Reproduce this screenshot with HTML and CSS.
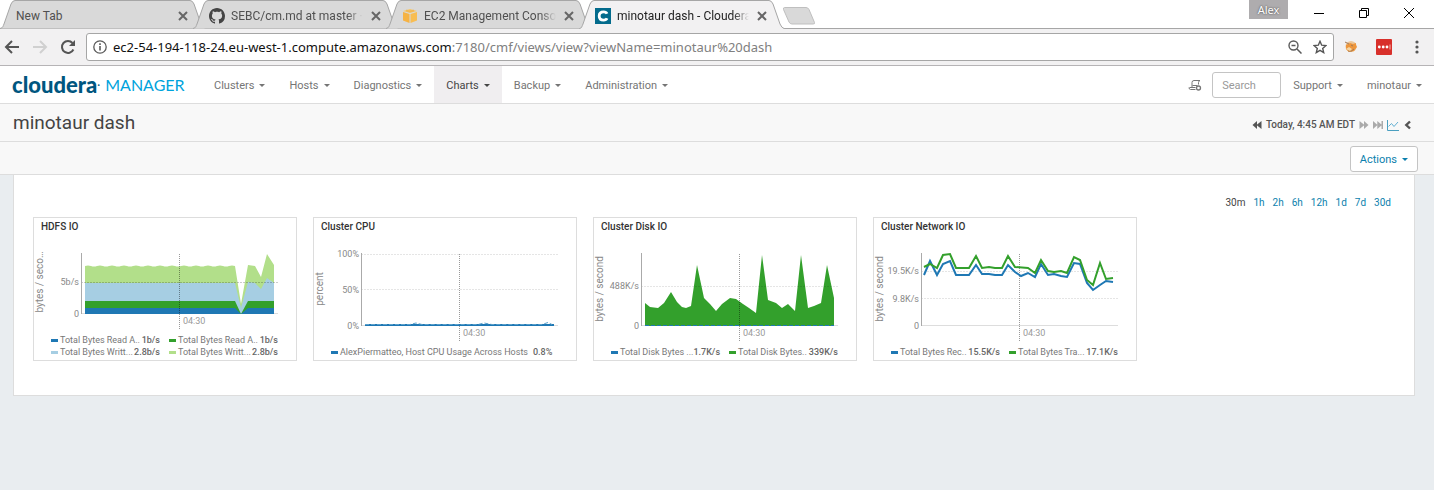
FILE: index.html
```html
<!DOCTYPE html>
<html lang="en">
<head>
<meta charset="utf-8">
<title>minotaur dash - Cloudera Manager</title>
<link rel="stylesheet" href="styles.css">
</head>
<body>
<header class="browser">
  <div class="tabstrip">
    <div class="tab">
      <svg class="tab-shape" viewBox="0 0 206 29" preserveAspectRatio="none"><path d="M0 28.5C3 28 3 26 4 24L11 4Q12.500 .5 15 .5H190Q192.500 .5 194 4L201 24Q202.500 28 206 28.500"/></svg>
      <button class="tab-title">New Tab</button>
      <button class="tab-close" aria-label="Close tab"><svg width="10" height="10" viewBox="0 0 10 10"><path d="M1 1l8 8M9 1l-8 8"/></svg></button>
    </div>
    <div class="tab">
      <svg class="tab-shape" viewBox="0 0 206 29" preserveAspectRatio="none"><path d="M0 28.5C3 28 3 26 4 24L11 4Q12.500 .5 15 .5H190Q192.500 .5 194 4L201 24Q202.500 28 206 28.500"/></svg>
      <svg class="favicon" viewBox="0 0 16 16"><path fill="#444" d="M8 0C3.580 0 0 3.580 0 8c0 3.540 2.290 6.530 5.470 7.590.4.070.55-.17.55-.38 0-.19-.01-.82-.01-1.490-2.010.37-2.530-.49-2.690-.94-.09-.23-.48-.94-.82-1.130-.28-.15-.68-.52-.01-.53.63-.01 1.080.58 1.230.82.72 1.210 1.870.87 2.330.66.070-.52.28-.87.51-1.070-1.780-.2-3.640-.89-3.640-3.950 0-.87.31-1.590.82-2.150-.08-.2-.36-1.020.08-2.120 0 0 .67-.21 2.200.82.640-.18 1.320-.27 2-.27s1.360.09 2 .27c1.530-1.040 2.200-.82 2.200-.82.440 1.100.16 1.920.08 2.120.51.56.82 1.270.82 2.150 0 3.070-1.870 3.750-3.650 3.950.29.25.54.73.54 1.480 0 1.070-.01 1.930-.01 2.200 0 .21.15.46.55.38A8.010 8.010 0 0 0 16 8c0-4.420-3.580-8-8-8z"/></svg>
      <button class="tab-title fade">SEBC/cm.md at master · A</button>
      <button class="tab-close" aria-label="Close tab"><svg width="10" height="10" viewBox="0 0 10 10"><path d="M1 1l8 8M9 1l-8 8"/></svg></button>
    </div>
    <div class="tab">
      <svg class="tab-shape" viewBox="0 0 206 29" preserveAspectRatio="none"><path d="M0 28.5C3 28 3 26 4 24L11 4Q12.500 .5 15 .5H190Q192.500 .5 194 4L201 24Q202.500 28 206 28.500"/></svg>
      <svg class="favicon" viewBox="0 0 16 16"><path fill="#f9c766" d="M1 3l7-2 7 2-7 2z"/><path fill="#f6b344" d="M1 4l6.500 2v9L1 12.500z"/><path fill="#f8bd52" d="M8.500 6L15 4v8.500L8.500 15z"/><path fill="#e8a33c" d="M4 1.500l4 1 4-1v2l-4 1-4-1z" opacity=".4"/></svg>
      <button class="tab-title fade">EC2 Management Consol</button>
      <button class="tab-close" aria-label="Close tab"><svg width="10" height="10" viewBox="0 0 10 10"><path d="M1 1l8 8M9 1l-8 8"/></svg></button>
    </div>
    <div class="tab active">
      <svg class="tab-shape" viewBox="0 0 206 29" preserveAspectRatio="none"><path d="M0 29C3 28 3 26 4 24L11 4Q12.500 .5 15 .5H190Q192.500 .5 194 4L201 24Q202.500 28 206 29"/></svg>
      <svg class="favicon" viewBox="0 0 16 16"><path fill="#036b8c" d="M0 0h16v16H0z"/><path fill="none" stroke="#fff" stroke-width="2.800" d="M12 10.300Q11.200 12.100 8.600 12.100C5.500 12.100 4.200 10.500 4.200 8s1.300-4.100 4.400-4.100q2.600 0 3.400 1.800"/></svg>
      <button class="tab-title fade">minotaur dash - Cloudera</button>
      <button class="tab-close" aria-label="Close tab"><svg width="10" height="10" viewBox="0 0 10 10"><path d="M1 1l8 8M9 1l-8 8"/></svg></button>
    </div>
    <button class="new-tab" aria-label="New tab"><svg width="36" height="20" viewBox="0 0 36 20"><path d="M3.500 1.500H25Q27 1.500 28 3.500l5.500 13q.7 1.500-1.500 1.500H11Q9 18 8 16L2.500 3.500Q2 1.500 3.500 1.500z" fill="#d9d9d9" stroke="#bfbfbf"/></svg></button>
    <div class="window-controls">
      <button class="profile">Alex</button>
      <button class="win" aria-label="Minimize"><svg width="12" height="12" viewBox="0 0 12 12"><path d="M1 6.500h10"/></svg></button>
      <button class="win" aria-label="Restore"><svg width="12" height="12" viewBox="0 0 12 12"><path d="M1.500 3.500h7v7h-7zM3.500 3.500v-2h7v7h-2"/></svg></button>
      <button class="win" aria-label="Close"><svg width="12" height="12" viewBox="0 0 12 12"><path d="M1 1l10 10M11 1L1 11"/></svg></button>
    </div>
  </div>
  <div class="toolbar">
    <button class="tool" aria-label="Back"><svg width="16" height="16" viewBox="0 0 16 16"><path d="M15 8H2M8 2L2 8l6 6" stroke="#555"/></svg></button>
    <button class="tool" aria-label="Forward"><svg width="16" height="16" viewBox="0 0 16 16"><path d="M1 8h13M8 2l6 6-6 6" stroke="#d0d0d0"/></svg></button>
    <button class="tool" aria-label="Reload"><svg width="16" height="16" viewBox="0 0 16 16"><path d="M13.400 10.500A6 6 0 1 1 12.500 4" stroke="#555"/><path class="head" d="M15 1v6H9z"/></svg></button>
    <div class="address">
      <svg width="14" height="14" viewBox="0 0 14 14"><circle cx="7" cy="7" r="6.200" fill="none" stroke="#5a5a5a" stroke-width="1.300"/><path d="M6.200 6h1.600v4.500H6.200zM6.200 3.300h1.600v1.600H6.200z" fill="#5a5a5a"/></svg>
      <a class="url" href="#">ec2-54-194-118-24.eu-west-1.compute.amazonaws.com<span>:7180/cmf/views/view?viewName=minotaur%20dash</span></a>
      <button class="plain" aria-label="Zoom out"><svg width="14" height="14" viewBox="0 0 14 14"><circle cx="5.500" cy="5.500" r="4.500" fill="none" stroke="#5a5a5a" stroke-width="1.400"/><path d="M3.500 5.500h4M9 9l4.500 4.500" stroke="#5a5a5a" stroke-width="1.500"/></svg></button>
      <button class="plain" aria-label="Bookmark"><svg width="14" height="14" viewBox="0 0 14 14"><path d="M7 1.300l1.700 3.900 4.200.4-3.200 2.800 1 4.200L7 10.400l-3.700 2.200 1-4.200L1.100 5.600l4.200-.4z" fill="none" stroke="#555" stroke-width="1.400"/></svg></button>
    </div>
    <button class="plain ext" aria-label="Extension"><svg width="14" height="14" viewBox="0 0 14 14"><circle cx="7" cy="6.500" r="5.500" fill="#ecc79a"/><path d="M2 5l4-2 3 1 3-1v2l1 2-3 4-5 1-3-3z" fill="#ed963c"/><path d="M1 2l4 2M4 11q4 1 6-2M7 5l2 1" stroke="#a0795a" fill="none"/><path d="M2 9l3-2 3 2-2 2z" fill="#f6d6a3"/></svg></button>
    <button class="plain ext" aria-label="Password manager"><svg width="16" height="16" viewBox="0 0 16 16"><rect width="16" height="16" rx="1" fill="#d8302b"/><path d="M14 5.500v5" stroke="#f3b5b2"/><circle cx="3.300" cy="8" r="1.400" fill="#fff"/><circle cx="7.200" cy="8" r="1.400" fill="#fff"/><circle cx="11" cy="8" r="1.400" fill="#fff"/></svg></button>
    <button class="plain ext" aria-label="Browser menu"><svg width="14" height="14" viewBox="0 0 14 14"><circle cx="7" cy="2" r="1.600" fill="#555"/><circle cx="7" cy="7" r="1.600" fill="#555"/><circle cx="7" cy="12" r="1.600" fill="#555"/></svg></button>
  </div>
</header>

<nav class="nav">
  <a class="brand" href="#"><b>cloudera</b><sup>·</sup><span>MANAGER</span></a>
  <button class="menu">Clusters</button>
  <button class="menu">Hosts</button>
  <button class="menu">Diagnostics</button>
  <button class="menu current">Charts</button>
  <button class="menu">Backup</button>
  <button class="menu">Administration</button>
  <div class="nav-right">
    <button class="plain" aria-label="Recent commands"><svg width="14" height="14" viewBox="0 0 14 14"><path d="M4 9V4.500Q4 2.500 6 2.500h6q-1.500.5-1.500 2v2M1 9.500q0 2 1.500 2H7.500M1.500 9.500h6M4.500 7.500h5" fill="none" stroke="#777"/><circle cx="10.500" cy="10" r="2" fill="none" stroke="#777" stroke-width="1.300"/></svg></button>
    <input class="search" type="text" placeholder="Search" aria-label="Search">
    <button class="menu">Support</button>
    <button class="menu">minotaur</button>
  </div>
</nav>

<section class="titlebar">
  <h1>minotaur dash</h1>
  <div class="timebar">
    <button class="plain" aria-label="Step back"><svg width="10" height="10" viewBox="0 0 10 10"><path d="M5 1v8L.5 5zM9.500 1v8L4.500 5z" fill="#555"/></svg></button>
    <time>Today, 4:45 AM EDT</time>
    <button class="plain" aria-label="Step forward"><svg width="10" height="10" viewBox="0 0 10 10"><path d="M.5 1l5 4-5 4zM5 1l4.500 4L5 9z" fill="#aaa"/></svg></button>
    <button class="plain" aria-label="Jump to now"><svg width="10" height="10" viewBox="0 0 10 10"><path d="M0 1l4.500 4L0 9zM4.300 1L9 5 4.300 9zM8.500 1H10v8H8.500z" fill="#aaa"/></svg></button>
    <button class="plain" aria-label="Show timeline"><svg width="12" height="12" viewBox="0 0 12 12"><path d="M.5 1v10.500H12" fill="none" stroke="#4b9fc0"/><path d="M1.500 7.500l3-3 2.500 3 4-4.500" fill="none" stroke="#62b0d2"/></svg></button>
    <button class="plain" aria-label="Collapse"><svg width="10" height="10" viewBox="0 0 10 10"><path d="M7 1.500L3.300 5 7 8.500" fill="none" stroke="#555" stroke-width="2.400"/></svg></button>
  </div>
</section>
<section class="actionbar"><button class="actions menu">Actions</button></section>

<main class="panel">
  <div class="ranges">
    <b>30m</b><a href="#">1h</a><a href="#">2h</a><a href="#">6h</a><a href="#">12h</a><a href="#">1d</a><a href="#">7d</a><a href="#">30d</a>
  </div>
  <div class="cards">
    <article class="card">
      <h2>HDFS IO</h2>
      <svg class="plot" viewBox="1 1 262 125">
        <path fill="#b2df8a" d="M52 33q3-1 6 0t6 0 6 0 6 0 6 0 6 0 6 0 6 0 6 0 6 0 6 0 6 0 6 0 6 0 6 0 6 0 6 0 6 0 6 0 6 0 6 0 6 0 6 0 6 0 6 0L202 33 208 71 215 32 222 33 228 44 234 21 241 32V81H52z"/>
        <path fill="#a6cee3" d="M52 50H202L208 75 215 49 222 50 228 56 234 45 241 50V81H52z"/>
        <path fill="#33a02c" d="M52 68H202L208 81 215 68H241V81H52z"/>
        <path fill="#1f78b4" d="M52 75H202L208 81 215 75H241V81H52z"/>
        <path class="mark" stroke="#33a02c" d="M52 74.500H202M215 74.500H241"/>
        <path class="grid over" d="M48 49.500H245"/><path class="base" d="M48 80.500H52M241 80.500H245"/><path class="axis" d="M48.500 20V81"/><path class="now" d="M146.500 21V97"/>
        <g class="ylabels"><text x="46" y="52">5b/s</text><text x="46" y="84">0</text></g>
        <text class="xlabel" x="150" y="91">04:30</text>
        <text class="unit" transform="translate(10 49) rotate(-90)">bytes / seco…</text>
      </svg>
      <ul class="legend">
        <li><i class="blue"></i><span>Total Bytes Read A..</span><b>1b/s</b></li>
        <li><i class="green"></i><span>Total Bytes Read A..</span><b>1b/s</b></li>
        <li><i class="sky"></i><span>Total Bytes Writt...</span><b>2.8b/s</b></li>
        <li><i class="lime"></i><span>Total Bytes Writt...</span><b>2.8b/s</b></li>
      </ul>
    </article>
    <article class="card">
      <h2>Cluster CPU</h2>
      <svg class="plot" viewBox="1 1 262 125">
        <path class="grid" d="M48 21.500H245M48 56.500H245"/><path class="base" d="M48 92.500H245"/><path class="axis" d="M48.500 20V93"/><path class="now" d="M146.500 21V109"/>
        <path fill="none" stroke="#1f78b4" stroke-width="2" d="M52 92H241"/>
        <path class="mark" stroke="#5a9fca" d="M52 91.500H97L103 90 109 91.500H165L171 90 179 91.500H229L235 89.500 239 91.500"/>
        <g class="ylabels"><text x="46" y="24">100%</text><text x="46" y="60">50%</text><text x="46" y="96">0%</text></g>
        <text class="xlabel" x="150" y="103">04:30</text>
        <text class="unit" transform="translate(10 56) rotate(-90)">percent</text>
      </svg>
      <ul class="legend single">
        <li><i class="blue"></i><span>AlexPiermatteo, Host CPU Usage Across Hosts</span><b>0.8%</b></li>
      </ul>
    </article>
    <article class="card">
      <h2>Cluster Disk IO</h2>
      <svg class="plot" viewBox="1 1 262 125">
        <path fill="#33a02c" d="M52 70L57 74 65 75 71 70 78 59 84 69 89 74 93 75 98 73 104 32 111 65 117 71 123 78 129 71 137 65 143 66 150 71 156 75 163 80 169 22 175 67 183 70 189 75 195 71 202 78 208 22 215 75 221 73 228 70 234 32 241 65V93H52z"/>
        <path class="mark" stroke="#1f78b4" d="M52 92.500H241"/>
        <path class="grid" d="M48 53.500H245"/><path class="base" d="M241 92.500H245M48 92.500H52"/><path class="axis" d="M48.500 20V93"/><path class="now" d="M146.500 21V109"/>
        <g class="ylabels"><text x="46" y="56">488K/s</text><text x="46" y="96">0</text></g>
        <text class="xlabel" x="150" y="103">04:30</text>
        <text class="unit" transform="translate(10 56) rotate(-90)">bytes / second</text>
      </svg>
      <ul class="legend">
        <li><i class="blue"></i><span>Total Disk Bytes ...</span><b>1.7K/s</b></li>
        <li><i class="green"></i><span>Total Disk Bytes..</span><b>339K/s</b></li>
      </ul>
    </article>
    <article class="card">
      <h2>Cluster Network IO</h2>
      <svg class="plot" viewBox="1 1 262 125">
        <path class="grid" d="M48 38.500H245M48 65.500H245"/><path class="base" d="M48 92.500H245"/><path class="axis" d="M48.500 20V93"/><path class="now" d="M146.500 21V109"/>
        <path class="line" stroke="#1f78b4" d="M51 42L57 28 64 42 70 31 77 28 83 42H96L103 32 109 41H116L122 42 129 42 135 32 142 39 148 43 155 40 162 44 168 31 175 42 181 41 188 43 194 44 201 30 207 31 214 50 220 57 227 52 233 48 240 49"/>
        <path class="line" stroke="#33a02c" d="M51 34L57 31 64 35 70 22 77 21 83 35H96L103 23 109 35 116 34 122 35 129 35 135 23 142 34 155 35 162 40 168 27 175 38 181 39 188 38 194 40 201 24 207 27 214 47 220 52 227 30 233 46 240 45"/>
        <g class="ylabels"><text x="46" y="41">19.5K/s</text><text x="46" y="69">9.8K/s</text><text x="46" y="96">0</text></g>
        <text class="xlabel" x="150" y="103">04:30</text>
        <text class="unit" transform="translate(10 56) rotate(-90)">bytes / second</text>
      </svg>
      <ul class="legend">
        <li><i class="blue"></i><span>Total Bytes Rec..</span><b>15.5K/s</b></li>
        <li><i class="green"></i><span>Total Bytes Tra...</span><b>17.1K/s</b></li>
      </ul>
    </article>
  </div>
</main>
</body>
</html>
```

FILE: styles.css
```css
* { box-sizing: border-box; }
body { margin: 0; background: #e9edf0; color: #444; font: 11px/16px Roboto, "Liberation Sans", sans-serif; }
button { margin: 0; padding: 0; border: 0; background: none; color: inherit; font: inherit; white-space: nowrap; }
a { color: #0b7fad; text-decoration: none; }
svg { display: block; flex: none; }
h1, h2, ul { margin: 0; padding: 0; }
.plain { flex: none; }

.browser { background: #fff; }
.tabstrip { display: flex; height: 29px; border-bottom: 1px solid #a6a6a6; }
.tab { position: relative; display: flex; align-items: center; width: 206px; height: 29px; margin-right: -13px; padding: 2px 18px 0 16px; color: #505050; }
.tab-shape { position: absolute; inset: 0; width: 100%; height: 29px; }
.tab-shape path { fill: #d9d9d9; stroke: #a6a6a6; }
.tab.active { z-index: 1; color: #222; }
.tab.active .tab-shape path { fill: #f2f1f2; }
.favicon { position: relative; width: 16px; height: 16px; margin-right: 6px; }
.tab-title { position: relative; flex: 1; min-width: 0; font-size: 12px; text-align: left; }
.fade { -webkit-mask-image: linear-gradient(90deg, #000 88%, transparent); mask-image: linear-gradient(90deg, #000 88%, transparent); }
.tab-close { position: relative; margin-left: 8px; }
.tab-close path { stroke: #666; stroke-width: 2; }
.new-tab { margin: 6px 0 0 9px; align-self: flex-start; }
.window-controls { display: flex; align-items: flex-start; margin-left: auto; padding-right: 3px; }
.profile { width: 39px; height: 19px; margin-right: 8px; background: #aeacae; color: #fff; font: 11px/18px "Noto Sans", sans-serif; text-shadow: 0 0 2px #333; }
.win { display: flex; justify-content: center; width: 45px; padding-top: 7px; }
.win path { fill: none; stroke: #000; stroke-width: 1; }
.toolbar { display: flex; align-items: center; height: 37px; padding: 0 10px 0 4px; background: #f2f1f2; border-bottom: 1px solid #b6b4b6; }
.tool { margin-right: 12px; }
.tool + .tool + .tool { margin-right: 10px; }
.tool path { fill: none; stroke-width: 2; }
.tool .head { fill: #555; }
.address { display: flex; flex: 1; align-items: center; gap: 11px; height: 28px; min-width: 0; padding: 0 6px; background: #fff; border: 1px solid #a6a6a6; border-radius: 3px; }
.url { flex: 1; min-width: 0; overflow: hidden; margin-left: -5px; color: #111; font: 13px/20px "Noto Sans", sans-serif; white-space: nowrap; }
.url span { color: #808080; }
.ext { margin-left: 10px; }
.ext + .ext { margin-left: 18px; }

.nav { display: flex; align-items: center; height: 38px; background: #fff; border-bottom: 1px solid #ddd; color: #757575; }
.brand { display: flex; align-items: center; width: 188px; padding-left: 12px; color: #00a3dc; font: 16px/24px Lato, sans-serif; }
.brand b { color: #00567f; font-size: 22px; font-weight: 900; }
.brand sup { width: 8px; font-size: 11px; color: #00567f; }
.menu { display: inline-flex; align-items: center; gap: 5px; height: 37px; padding: 2px 12px 0; }
.menu::after { content: ""; border: 3px solid transparent; border-top-color: currentColor; border-bottom: 0; }
.brand + .menu { margin-left: 14px; }
.menu.current { background: #f0eef0; color: #444; }
.nav-right { display: flex; align-items: center; margin-left: auto; }
.search { width: 69px; height: 26px; margin-left: 10px; padding: 1px 9px 0; border: 1px solid #c4c4c4; border-radius: 3px; font: inherit; }
.search::placeholder { color: #999; opacity: 1; }

.titlebar { display: flex; align-items: center; justify-content: space-between; height: 38px; padding: 0 21px 0 13px; background: #f8f8f8; border-bottom: 1px solid #ddd; }
h1 { font-size: 19px; line-height: 24px; font-weight: 400; }
.timebar { display: flex; align-items: center; gap: 4px; padding-top: 5px; }
.timebar time { font-size: 10px; font-weight: 500; color: #555; }
.actionbar { display: flex; justify-content: flex-end; align-items: center; height: 33px; padding: 2px 16px 0; background: #f8f8f8; border-bottom: 1px solid #ddd; }
.actions { height: 26px; padding: 1px 9px 0; background: #fff; border: 1px solid #c4c4c4; border-radius: 3px; color: #0b7fad; }

.panel { margin: 0 19px 0 13px; padding: 20px 19px 34px; background: #fff; border: 1px solid #ddd; border-top: 0; }
.ranges { display: flex; justify-content: flex-end; gap: 8px; padding-right: 4px; font-size: 10px; }
.ranges b { font-weight: 400; }
.cards { display: grid; grid-template-columns: repeat(auto-fill, 264px); gap: 16px; margin-top: 6px; }
.card { display: flex; flex-direction: column; height: 144px; border: 1px solid #ddd; background: #fff; }
h2 { padding: 1px 7px 0; font-size: 10px; line-height: 16px; font-weight: 500; color: #333; }
.plot { flex: none; width: 100%; margin: -1px 0 -32px; font-size: 9px; }
.ylabels { fill: #888; text-anchor: end; }
.xlabel { fill: #999; }
.unit { fill: #888; font-size: 10px; text-anchor: middle; }
.grid { stroke: #000; stroke-opacity: .1; stroke-dasharray: 2 1; }
.grid.over { stroke-opacity: .2; }
.base { stroke: #ddd; }
.axis { stroke: #aaa; }
.now { stroke: #000; stroke-opacity: .4; stroke-dasharray: 1 1; }
.mark { fill: none; stroke-dasharray: 4 2; }
.line { fill: none; stroke-width: 2; }
.legend { display: grid; grid-template-columns: 109px 109px; column-gap: 9px; margin: auto 0 0 17px; padding-bottom: 2px; list-style: none; font-size: 9px; line-height: 12px; color: #777; }
.legend.single { display: block; }
.legend li { display: flex; align-items: center; white-space: nowrap; }
.legend i { flex: none; width: 7px; height: 3px; margin-right: 2px; }
.legend b { margin-left: auto; font-weight: 500; color: #666; }
.legend.single b { margin-left: 5px; }
.blue { background: #1f78b4; }
.green { background: #33a02c; }
.sky { background: #a6cee3; }
.lime { background: #b2df8a; }
```
